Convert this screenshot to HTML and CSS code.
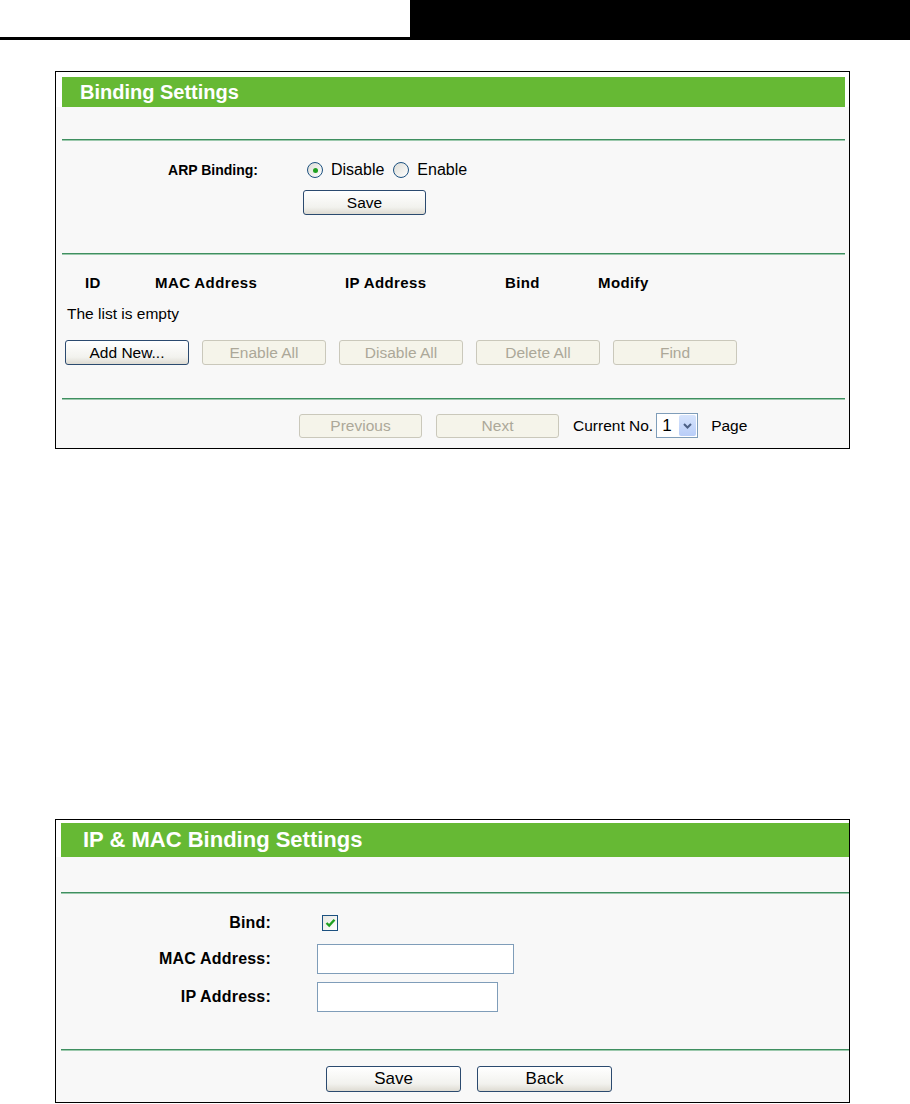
FILE: index.html
```html
<!DOCTYPE html>
<html>

<head>
    <title>Binding Settings</title>
    <meta charset="utf-8">
    <link rel="stylesheet" href="styles.css">
</head>

<body>

    <div class="top">
        <div class="top-left"></div>
        <div class="top-right"></div>
    </div>

    <!-- første panel: liste over bindinger -->
    <section class="panel p1">
        <div class="head">
            <div class="titel">Binding Settings</div>
        </div>
        <div class="body">
            <div class="gap"></div>
            <div class="line"></div>

            <div class="row arp">
                <div class="lbl">ARP Binding:</div>
                <div class="ctl">
                    <span class="radio valgt"></span><span class="rtxt">Disable</span>
                    <span class="radio"></span><span class="rtxt">Enable</span>
                </div>
            </div>
            <div class="row gem">
                <div class="lbl"></div>
                <div class="ctl"><button class="btn">Save</button></div>
            </div>

            <div class="line l2"></div>

            <div class="thead">
                <span class="c-id">ID</span>
                <span class="c-mac">MAC Address</span>
                <span class="c-ip">IP Address</span>
                <span class="c-bind">Bind</span>
                <span class="c-mod">Modify</span>
            </div>
            <div class="tom">The list is empty</div>

            <div class="knapper">
                <button class="btn">Add New...</button>
                <button class="btn off">Enable All</button>
                <button class="btn off">Disable All</button>
                <button class="btn off">Delete All</button>
                <button class="btn off">Find</button>
            </div>

            <div class="line l3"></div>

            <div class="nav">
                <button class="btn off">Previous</button>
                <button class="btn off">Next</button>
                <span class="cur">Current No.</span>
                <div class="vaelg">
                    <span class="val">1</span>
                    <span class="pil">
                        <svg width="9" height="6" viewBox="0 0 9 6"><path d="M1 1 L4.5 4.5 L8 1" fill="none" stroke="#4d6185" stroke-width="2"/></svg>
                    </span>
                </div>
                <span class="side">Page</span>
            </div>
        </div>
    </section>

    <!-- andet panel: ny binding -->
    <section class="panel p2">
        <div class="head">
            <div class="titel">IP &amp; MAC Binding Settings</div>
        </div>
        <div class="body">
            <div class="gap"></div>
            <div class="line"></div>

            <div class="frow bind">
                <div class="lbl">Bind:</div>
                <div class="ctl">
                    <span class="check">
                        <svg width="11" height="10" viewBox="0 0 11 10"><path d="M1.5 5 L4.2 7.6 L9.5 1.8" fill="none" stroke="#21a121" stroke-width="2.4"/></svg>
                    </span>
                </div>
            </div>
            <div class="frow mac">
                <div class="lbl">MAC Address:</div>
                <div class="ctl"><input class="felt bred" type="text"></div>
            </div>
            <div class="frow ip">
                <div class="lbl">IP Address:</div>
                <div class="ctl"><input class="felt smal" type="text"></div>
            </div>

            <div class="line l4"></div>

            <div class="bund">
                <button class="btn stor">Save</button>
                <button class="btn stor">Back</button>
            </div>
        </div>
    </section>

</body>

</html>
```

FILE: styles.css
```css
* {
    box-sizing: border-box;
}

body {
    margin: 0;
    background: #fff;
    font-family: "Liberation Sans", Arial, sans-serif;
    font-size: 15.5px;
    color: #000;
}

.top {
    display: flex;
    height: 40px;
}

.top-left {
    width: 410px;
    border-bottom: 3px solid #000;
}

.top-right {
    flex: 1;
    background: #000;
}

.panel {
    width: 795px;
    margin-left: 55px;
    border: 1px solid #000;
    background: #f8f8f8;
}

.p1 {
    margin-top: 31px;
}

.p2 {
    margin-top: 370px;
}

.head {
    background: #fff;
}

.p1 .head {
    padding: 5px 4px 0 6px;
}

.p2 .head {
    padding: 3px 0 0 5px;
}

.titel {
    background: #66b934;
    color: #fff;
    font-weight: bold;
    display: flex;
    align-items: center;
}

.p1 .titel {
    height: 30px;
    font-size: 20px;
    padding-left: 18px;
}

.p2 .titel {
    height: 34px;
    font-size: 22px;
    padding-left: 22px;
}

.p1 .body {
    padding: 0 4px 10px 6px;
}

.p2 .body {
    padding: 0 0 10px 5px;
}

.p1 .gap {
    height: 32px;
}

.p2 .gap {
    height: 35px;
}

.line {
    height: 2px;
    background: #3f8f60;
    border-bottom: 1px solid #9cc9ad;
}

/* første panel */

.row {
    display: flex;
    align-items: center;
}

.row .lbl {
    width: 196px;
    text-align: right;
    font-weight: bold;
    font-size: 14px;
}

.row .ctl {
    margin-left: 45px;
    display: flex;
    align-items: center;
}

.arp {
    margin-top: 19px;
    height: 20px;
}

.gem {
    margin-top: 10px;
    height: 25px;
}

.radio {
    width: 16px;
    height: 16px;
    border: 1px solid #1c5180;
    border-radius: 50%;
    background: linear-gradient(135deg, #dcdcd6, #fff);
    margin-left: 4px;
    display: flex;
    align-items: center;
    justify-content: center;
}

.radio.valgt::after {
    content: "";
    width: 5px;
    height: 5px;
    border-radius: 50%;
    background: #21a121;
}

.rtxt + .radio {
    margin-left: 9px;
}

.rtxt {
    margin-left: 8px;
    font-size: 16px;
}

.btn {
    font-family: inherit;
    font-size: 15.5px;
    color: #000;
    width: 123px;
    height: 25px;
    padding: 0;
    border: 1px solid #2b4a6f;
    border-radius: 3px;
    background: linear-gradient(#fff, #f2f2ee 70%, #dedbd2);
}

.btn.off {
    color: #aca899;
    border-color: #cac8bb;
    background: #f5f4ea;
}

.l2 {
    margin-top: 38px;
}

.thead {
    margin-top: 17px;
    height: 20px;
    display: flex;
    align-items: center;
    padding-left: 23px;
    font-weight: bold;
    font-size: 15px;
    letter-spacing: 0.4px;
}

.c-id {
    width: 70px;
}

.c-mac {
    width: 190px;
}

.c-ip {
    width: 160px;
}

.c-bind {
    width: 93px;
}

.tom {
    margin-top: 12px;
    height: 20px;
    line-height: 20px;
    padding-left: 5px;
}

.knapper {
    margin-top: 16px;
    display: flex;
    gap: 13px;
    padding-left: 3px;
}

.knapper .btn {
    width: 124px;
}

.l3 {
    margin-top: 33px;
}

.nav {
    margin-top: 13px;
    display: flex;
    align-items: center;
    padding-left: 237px;
    gap: 14px;
}

.nav .btn {
    height: 24px;
}

.cur {
    margin-right: -11px;
}

.vaelg {
    width: 42px;
    height: 25px;
    border: 1px solid #7f9db9;
    background: #fff;
    display: flex;
    align-items: center;
    justify-content: space-between;
    padding: 1px;
}

.val {
    padding-left: 4px;
    font-size: 17px;
}

.pil {
    width: 17px;
    height: 100%;
    background: linear-gradient(#d7e4fc, #b8cdf8);
    border-radius: 2px;
    display: flex;
    align-items: center;
    justify-content: center;
}

.side {
    margin-left: -1px;
}

/* andet panel */

.frow {
    display: flex;
    align-items: center;
}

.frow .lbl {
    width: 210px;
    text-align: right;
    font-weight: bold;
    font-size: 16px;
    letter-spacing: 0.2px;
}

.frow .ctl {
    margin-left: 46px;
    display: flex;
    align-items: center;
}

.bind {
    margin-top: 19px;
    height: 20px;
}

.mac {
    margin-top: 11px;
    height: 30px;
}

.ip {
    margin-top: 8px;
    height: 30px;
}

.check {
    width: 16px;
    height: 16px;
    margin-left: 5px;
    border: 1px solid #1c5180;
    background: linear-gradient(135deg, #e8e8e2, #fff);
    display: flex;
    align-items: center;
    justify-content: center;
}

.felt {
    height: 30px;
    border: 1px solid #7f9db9;
    background: #fff;
    outline: none;
}

.bred {
    width: 197px;
}

.smal {
    width: 181px;
}

.l4 {
    margin-top: 37px;
}

.bund {
    margin-top: 15px;
    display: flex;
    gap: 16px;
    padding-left: 265px;
}

.btn.stor {
    width: 135px;
    height: 26px;
    font-size: 17px;
}
```
